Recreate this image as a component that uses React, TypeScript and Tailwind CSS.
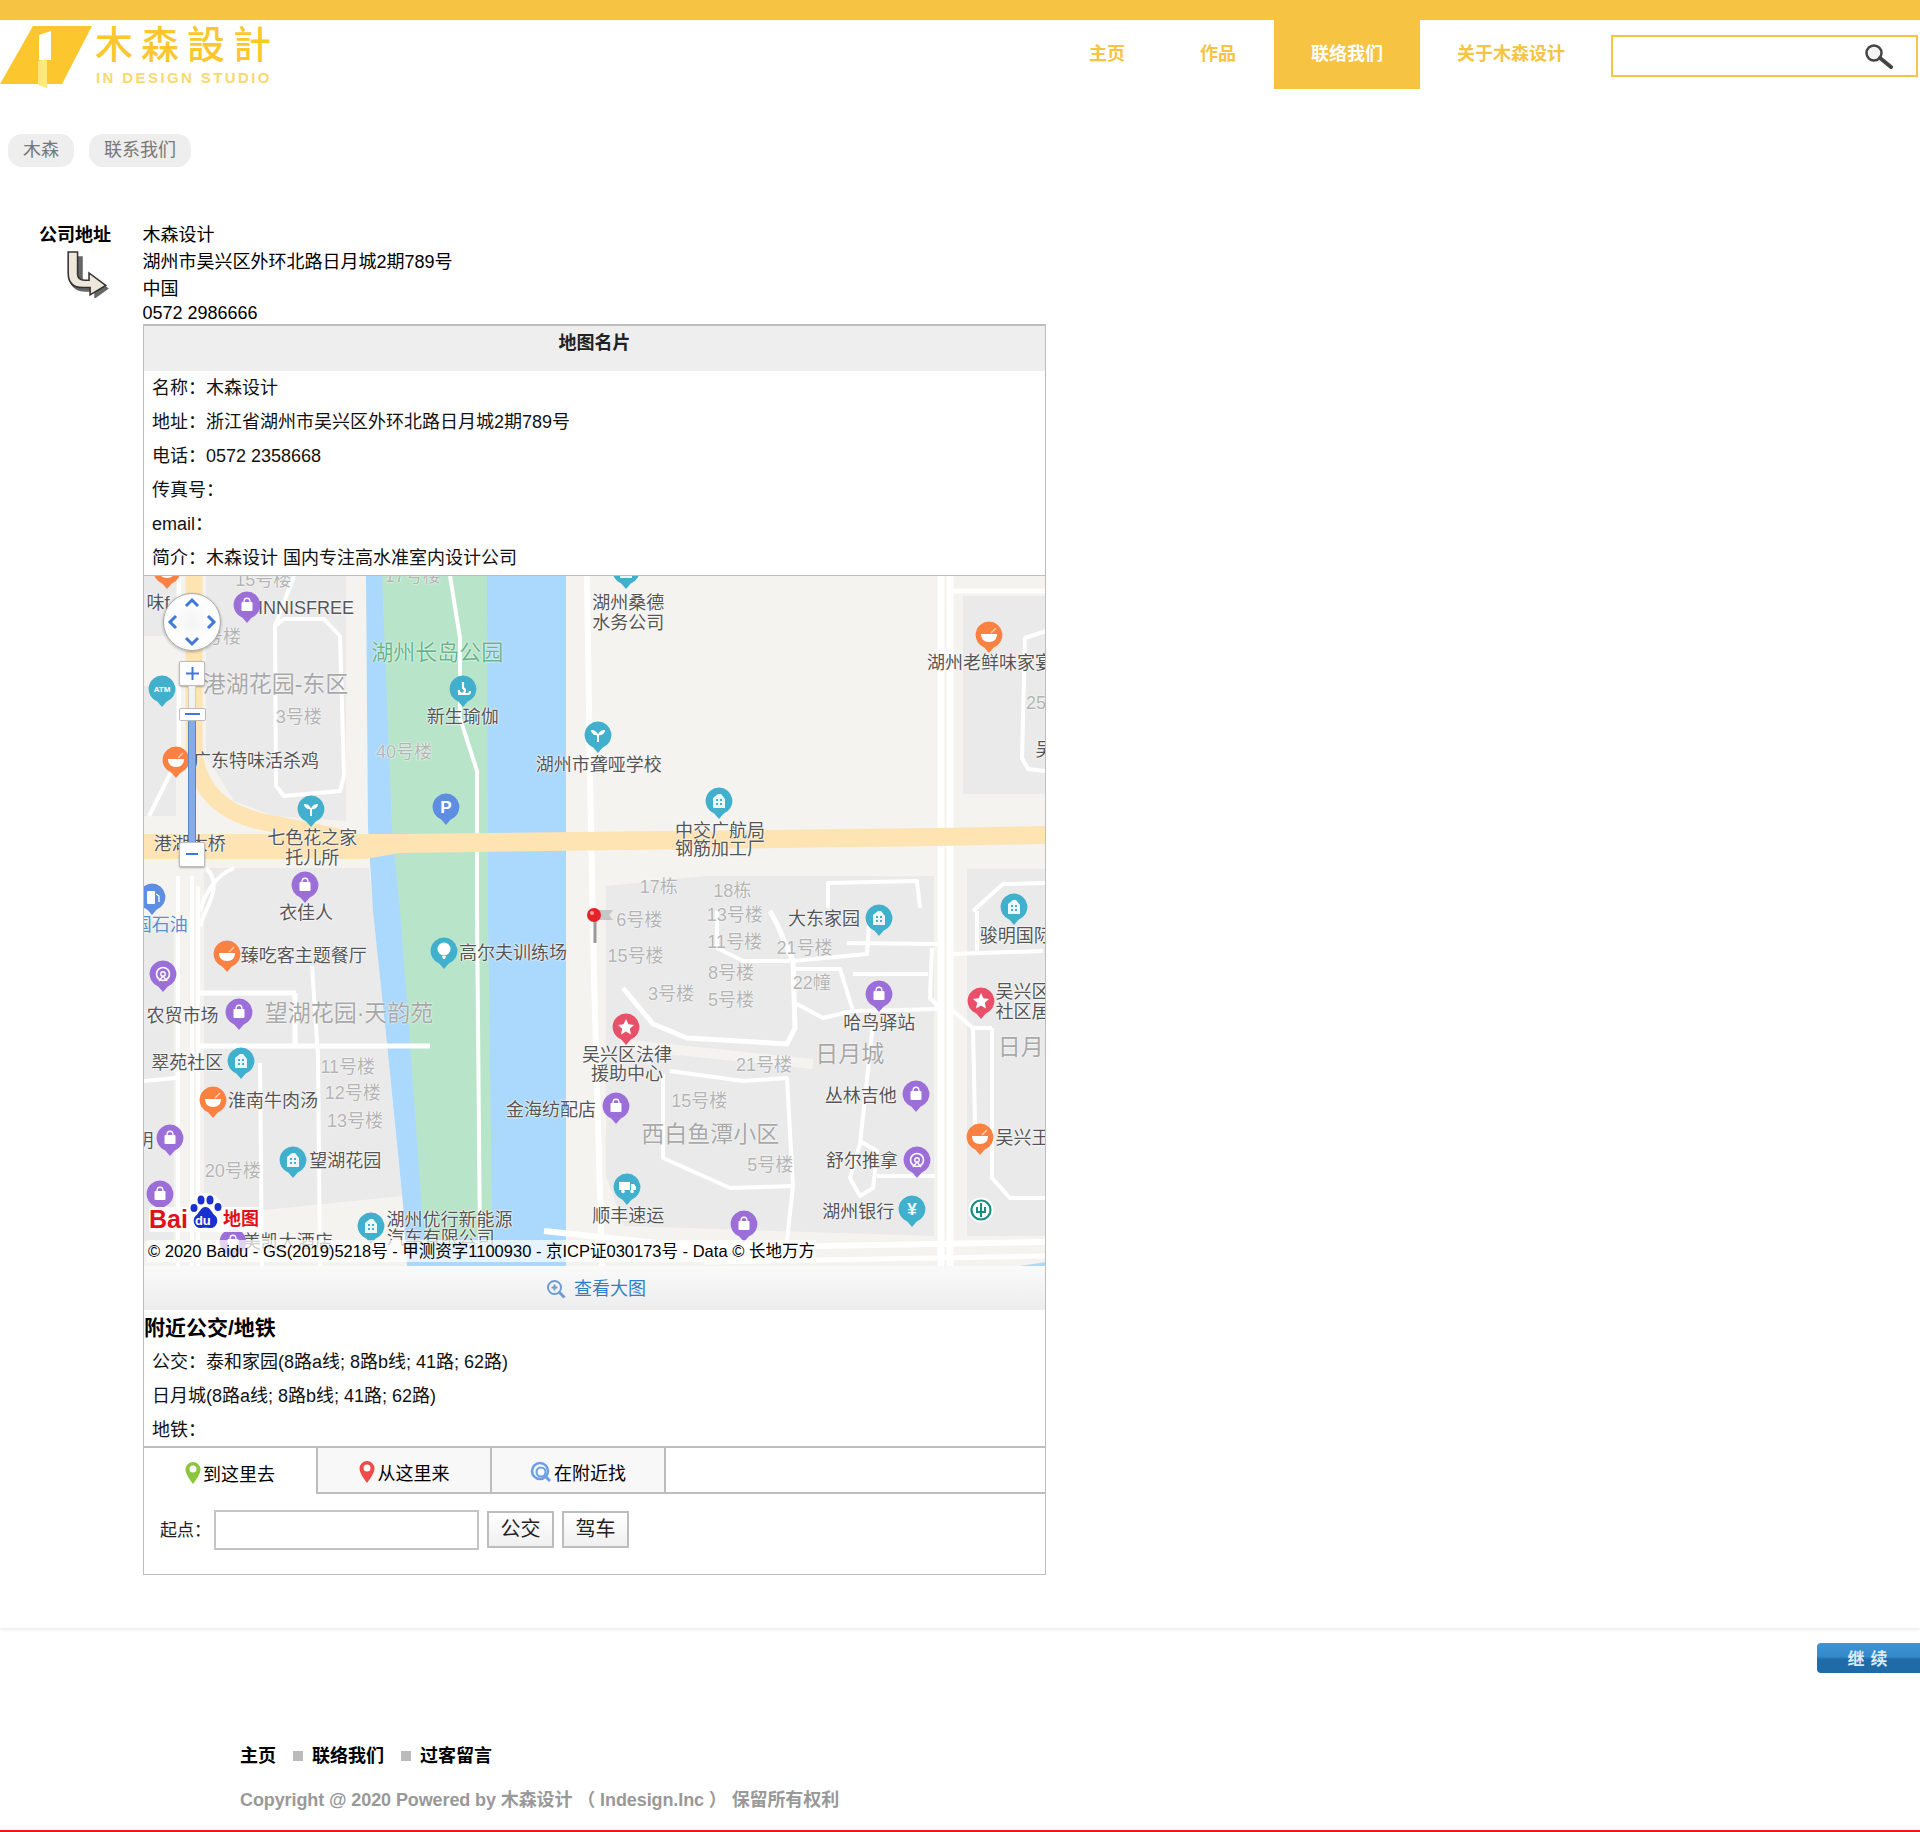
const mx = (sx: number) => sx * 1.2245 - 144;
const my = (sy: number) => sy * 1.2245 - 575;

type Kind = 'dark' | 'gray' | 'big' | 'park' | 'blue';

const kindClass: Record<Kind, string> = {
  dark: 'text-[18px] text-[#555] [text-shadow:0_0_2px_#fff,0_0_2px_#fff,0_0_1px_#fff]',
  gray: 'text-[18px] text-[#b4b4b4] [text-shadow:0_0_2px_#fff,0_0_1px_#fff]',
  big: 'text-[23px] text-[#a8a8a8] [text-shadow:0_0_2px_#fff,0_0_1px_#fff]',
  park: 'text-[22px] text-[#68b48a] [text-shadow:0_0_2px_#fff,0_0_1px_#fff]',
  blue: 'text-[18px] text-[#5b8fd0] [text-shadow:0_0_2px_#fff]',
};

const labels: [string, number, number, Kind][] = [
  ['味f', 129, 492, 'dark'],
  ['湖州桑德', 513, 492, 'dark'],
  ['水务公司', 513, 508, 'dark'],
  ['INNISFREE', 250, 496, 'dark'],
  ['新生瑜伽', 378, 585, 'dark'],
  ['湖州市聋哑学校', 489, 624, 'dark'],
  ['广东特味活杀鸡', 209, 621, 'dark'],
  ['七色花之家', 255, 684, 'dark'],
  ['托儿所', 255, 700, 'dark'],
  ['中交广航局', 588, 678, 'dark'],
  ['钢筋加工厂', 588, 693, 'dark'],
  ['湖州老鲜味家宴', 808.5, 541, 'dark'],
  ['港湖大桥', 155, 689, 'dark'],
  ['衣佳人', 250, 745, 'dark'],
  ['臻吃客主题餐厅', 248, 780, 'dark'],
  ['高尔夫训练场', 419, 778, 'dark'],
  ['农贸市场', 149, 829, 'dark'],
  ['翠苑社区', 153, 868, 'dark'],
  ['淮南牛肉汤', 223, 899, 'dark'],
  ['望湖花园', 282, 948, 'dark'],
  ['金海纺配店', 450, 906, 'dark'],
  ['吴兴区法律', 512, 861, 'dark'],
  ['援助中心', 512, 877, 'dark'],
  ['大东家园', 673, 750, 'dark'],
  ['骏明国际', 829.5, 764, 'dark'],
  ['哈鸟驿站', 718, 835, 'dark'],
  ['丛林吉他', 703, 895, 'dark'],
  ['舒尔推拿', 704, 948, 'dark'],
  ['湖州银行', 701, 989, 'dark'],
  ['顺丰速运', 513, 993, 'dark'],
  ['湖州优行新能源', 367, 996, 'dark'],
  ['汽车有限公司', 360, 1011, 'dark'],
  ['美凯大酒店', 235, 1014, 'dark'],
  ['吴兴区', 835, 810, 'dark'],
  ['社区居', 835, 826, 'dark'],
  ['吴兴王', 835, 929, 'dark'],
  ['明', 118, 931, 'dark'],
  ['吴', 853, 612, 'dark'],
  ['中国石油', 124, 755, 'blue'],
  ['港湖花园-东区', 225, 558, 'big'],
  ['望湖花园·天韵苑', 285, 827, 'big'],
  ['西白鱼潭小区', 580, 926, 'big'],
  ['日月城', 694, 860, 'big'],
  ['日月城', 843, 855, 'big'],
  ['湖州长岛公园', 357, 533, 'park'],
  ['15号楼', 215, 473, 'gray'],
  ['17号楼', 337, 470, 'gray'],
  ['5号楼', 178, 520, 'gray'],
  ['3号楼', 244, 585, 'gray'],
  ['40号楼', 330, 614, 'gray'],
  ['17栋', 538, 724, 'gray'],
  ['18栋', 598, 727, 'gray'],
  ['6号楼', 522, 751, 'gray'],
  ['13号楼', 600, 747, 'gray'],
  ['11号楼', 600, 769, 'gray'],
  ['21号楼', 657, 774, 'gray'],
  ['15号楼', 519, 780, 'gray'],
  ['8号楼', 597, 794, 'gray'],
  ['22幢', 663, 802, 'gray'],
  ['3号楼', 548, 811, 'gray'],
  ['5号楼', 597, 816, 'gray'],
  ['21号楼', 624, 869, 'gray'],
  ['15号楼', 571, 899, 'gray'],
  ['5号楼', 629, 951, 'gray'],
  ['11号楼', 284, 871, 'gray'],
  ['12号楼', 288, 892, 'gray'],
  ['13号楼', 290, 915, 'gray'],
  ['20号楼', 190, 956, 'gray'],
  ['25', 846, 574, 'gray'],
];

type Glyph = 'bag' | 'wheel' | 'atm' | 'yoga' | 'sprout' | 'building' | 'truck' | 'golf' | 'yuan' | 'bowl' | 'star' | 'p' | 'fuel';

const PURPLE = '#9c6fd8';
const TEAL = '#41b0cc';
const ORANGE = '#fb8143';
const RED = '#e8506a';
const BLUE = '#5d8ee2';

const pins: [number, number, string, Glyph][] = [
  [136, 466, ORANGE, 'bowl'],
  [511, 466, TEAL, 'building'],
  [202, 494, PURPLE, 'bag'],
  [808, 518, ORANGE, 'bowl'],
  [132, 562, TEAL, 'atm'],
  [378, 562, TEAL, 'yoga'],
  [488, 600, TEAL, 'sprout'],
  [144, 620, ORANGE, 'bowl'],
  [587, 654, TEAL, 'building'],
  [254, 660, TEAL, 'sprout'],
  [364, 659, BLUE, 'p'],
  [249, 722, PURPLE, 'bag'],
  [124, 732, BLUE, 'fuel'],
  [718, 749, TEAL, 'building'],
  [828, 740, TEAL, 'building'],
  [185, 779, ORANGE, 'bowl'],
  [363, 776, TEAL, 'golf'],
  [133, 795, PURPLE, 'wheel'],
  [718, 811, PURPLE, 'bag'],
  [801, 817, RED, 'star'],
  [195, 826, PURPLE, 'bag'],
  [511, 838, RED, 'star'],
  [197, 866, TEAL, 'building'],
  [174, 898, ORANGE, 'bowl'],
  [748, 893, PURPLE, 'bag'],
  [503, 903, PURPLE, 'bag'],
  [800, 928, ORANGE, 'bowl'],
  [139, 929, PURPLE, 'bag'],
  [239, 947, TEAL, 'building'],
  [749, 947, PURPLE, 'wheel'],
  [512, 969, TEAL, 'truck'],
  [131, 975, PURPLE, 'bag'],
  [745, 987, TEAL, 'yuan'],
  [303, 1001, TEAL, 'building'],
  [608, 999, PURPLE, 'bag'],
  [190, 1014, PURPLE, 'bag'],
];

function GlyphShape({ g }: { g: Glyph }) {
  switch (g) {
    case 'bag':
      return (
        <g>
          <rect x="8.5" y="11" width="11" height="9" rx="1" fill="#fff" />
          <path d="M11 11c0-5 6-5 6 0" fill="none" stroke="#fff" strokeWidth="1.3" />
        </g>
      );
    case 'wheel':
      return (
        <g fill="none" stroke="#fff">
          <circle cx="14" cy="14" r="6.5" strokeWidth="1.6" />
          <circle cx="14" cy="14" r="2.2" strokeWidth="1.4" />
          <path d="M10 21l4-5 4 5" strokeWidth="1.3" />
        </g>
      );
    case 'atm':
      return (
        <text x="14" y="17" textAnchor="middle" fontSize="8" fontWeight="700" fill="#fff">
          ATM
        </text>
      );
    case 'yoga':
      return <path d="M14 7v6a3 3 0 1 1-4 2M9 19h10c1 0 2-1 2-3" fill="none" stroke="#fff" strokeWidth="2.2" />;
    case 'sprout':
      return (
        <g fill="#fff">
          <path d="M14 14C13 10 10 9 7 9c0 3 3 6 7 5z" />
          <path d="M14 14c1-4 4-5 7-5 0 3-3 6-7 5z" />
          <rect x="13" y="13" width="2" height="8" />
        </g>
      );
    case 'building':
      return (
        <g>
          <path d="M8 21V11l5-4h3l4 5v9z" fill="#fff" fillOpacity="0.9" />
          <path d="M11 12h2v2h-2zM15 12h2v2h-2zM11 16h2v2h-2zM15 16h2v2h-2z" fill={TEAL} />
        </g>
      );
    case 'truck':
      return (
        <g fill="#fff">
          <rect x="6" y="9" width="11" height="8" />
          <path d="M18 11h3l2 3v3h-5z" />
          <circle cx="10" cy="18.5" r="1.8" />
          <circle cx="19" cy="18.5" r="1.8" />
        </g>
      );
    case 'golf':
      return (
        <g>
          <circle cx="14" cy="12" r="6.5" fill="#fff" />
          <path d="M12 19h4l-1 3h-2z" fill="#fff" />
        </g>
      );
    case 'yuan':
      return (
        <text x="14" y="20" textAnchor="middle" fontSize="17" fontWeight="700" fill="#fff">
          ¥
        </text>
      );
    case 'bowl':
      return (
        <g>
          <path d="M6 13h16c0 5-3 8-8 8s-8-3-8-8z" fill="#fff" />
          <path d="M16 12l5-5" stroke="#ffd0b0" strokeWidth="1.4" />
        </g>
      );
    case 'star':
      return <polygon points="14,6 16.4,11.3 22,12 17.8,15.8 19,21.5 14,18.6 9,21.5 10.2,15.8 6,12 11.6,11.3" fill="#fff" />;
    case 'p':
      return (
        <text x="14" y="20" textAnchor="middle" fontSize="17" fontWeight="700" fill="#fff">
          P
        </text>
      );
    case 'fuel':
      return (
        <g fill="#fff">
          <rect x="9" y="8" width="8" height="13" rx="1" />
          <path d="M18 11l3 2v6" stroke="#fff" fill="none" strokeWidth="1.3" />
        </g>
      );
  }
}

function Pin({ sx, sy, color, glyph }: { sx: number; sy: number; color: string; glyph: Glyph }) {
  return (
    <svg
      className="absolute"
      style={{ left: mx(sx) - 14, top: my(sy) - 14 }}
      width="28"
      height="33"
      viewBox="0 0 28 33"
    >
      <path d="M14 0.5a13.5 13.5 0 0 1 4.5 26.2L14 32l-4.5-5.3A13.5 13.5 0 0 1 14 0.5z" fill={color} />
      <GlyphShape g={glyph} />
    </svg>
  );
}

function MapBase() {
  return (
    <svg className="absolute inset-0" width="902" height="690" viewBox="0 0 902 690">
      <rect width="902" height="690" fill="#f5f3f0" />
      {/* blocks */}
      <g fill="#eaeaea">
        <path d="M62 0H202V245L130 240 90 225 62 180Z" />
        <rect x="0" y="110" width="32" height="130" />
        <rect x="0" y="0" width="32" height="60" />
        <path d="M60 292H225L258 620 60 640Z" />
        <rect x="0" y="345" width="30" height="320" />
        <path d="M462 310L560 300H790V660L480 650 462 600Z" />
        <rect x="819" y="20" width="83" height="198" />
        <rect x="823" y="293" width="79" height="367" />
      </g>
      {/* river and park */}
      <path d="M222 0L224 252 229 335 243 468 259 628 263 690H422V0Z" fill="#aad9fd" />
      <path d="M238 0L248 252 256 335 266 468 278 635 282 662H349L348 635 344 335 343 0Z" fill="#b8e5ca" />
      <path d="M876 690L902 686V690Z" fill="#aad9fd" />
      {/* white roads */}
      <g fill="none" stroke="#fff" strokeWidth="4" strokeLinejoin="round">
        <path d="M306 0L316 62V142L333 195V335L336 670" />
        <path d="M150 0L131 50 140 43H180L196 60 200 200 196 215 140 220 132 210 131 50" />
        <path d="M35 0V60M35 110V180L5 240" />
        <path d="M443 0L446 200 450 400 458 690" strokeWidth="6" />
        <path d="M797 0V690M806 0V690" strokeWidth="7" />
        <path d="M809 15H902" strokeWidth="5" />
        <path d="M902 55L881 62 878 182 884 193 902 195" />
        <path d="M34 300V690M48 300V690M54 310V690" />
        <path d="M56 417H152M151 417V470M56 470H286" strokeWidth="5" />
        <path d="M168 390L174 480 176 690M116 487L118 690M0 505L32 502" />
        <path d="M62 292C80 310 62 330 56 350M90 292C70 300 60 320 56 335" />
        <path d="M479 412L509 448 543 462 643 468 651 452 649 385 633 348 626 335" strokeWidth="5" />
        <path d="M684 332V307L773 305 776 332" />
        <path d="M726 335L723 378 649 385" />
        <path d="M573 335V372L599 385 646 385" />
        <path d="M649 393H696L709 435 679 442 653 428" />
        <path d="M709 398H784M709 435L796 433M703 367L793 368" />
        <path d="M729 448L716 568 706 602 716 620 729 612 733 575 716 565" />
        <path d="M733 600H791" />
        <path d="M526 495L599 505 643 502 649 610 643 665M519 498V582L586 612 649 610" />
        <path d="M809 378L899 375M809 435L829 452H848M829 452L831 548M848 452V602L866 622H902" />
        <path d="M902 307L859 308 829 335M833 335V375" />
        <path d="M788 372L786 422 796 432" />
        <path d="M400 655L560 672 902 666" strokeWidth="6" />
        <path d="M560 686L902 680" strokeWidth="5" />
      </g>
      <path d="M476 468L669 488" stroke="#f5f3f0" strokeWidth="10" fill="none" />
      {/* main roads */}
      <path d="M0 258H221L256 258 793 252 902 250V268L793 270 256 277 221 283H0Z" fill="#fee3b3" />
      <path d="M50 0V175Q55 230 115 245L200 262" stroke="#fee3b3" strokeWidth="17" fill="none" />
    </svg>
  );
}

function MapControls() {
  return (
    <>
      <div className="absolute left-[19px] top-[17px] w-[58px] h-[58px] rounded-full border border-[#aaa] bg-[radial-gradient(circle_at_center,#f4f4f4_0%,#fff_60%,#eee_100%)] shadow-[0_1px_3px_rgba(0,0,0,0.3)]">
        <svg width="56" height="56" viewBox="0 0 56 56" fill="none" stroke="#3f78d8" strokeWidth="3">
          <path d="M22 12l6-6 6 6M22 44l6 6 6-6M12 22l-6 6 6 6M44 22l6 6-6 6" />
        </svg>
      </div>
      <div className="absolute left-[35px] top-[85px] w-[26px] flex flex-col items-center">
        <div className="w-[26px] h-[25px] rounded-[2px] border border-[#bbb] bg-white shadow-[0_1px_2px_rgba(0,0,0,0.3)] flex items-center justify-center">
          <svg width="13" height="13" viewBox="0 0 13 13" stroke="#3f78d8" strokeWidth="2">
            <path d="M6.5 0v13M0 6.5h13" />
          </svg>
        </div>
        <div className="w-[8px] h-[22px] border-x border-[#ccc] bg-[#f2f2f2]" />
        <div className="w-[27px] h-[13px] rounded-[2px] border border-[#bbb] bg-white flex items-center justify-center">
          <div className="w-[15px] h-[2px] bg-[#3f78d8]" />
        </div>
        <div className="w-[8px] h-[121px] bg-[#86ace8] border-x border-[#5a84c8]" />
        <div className="w-[26px] h-[25px] rounded-[2px] border border-[#bbb] bg-white shadow-[0_1px_2px_rgba(0,0,0,0.3)] flex items-center justify-center">
          <div className="w-[12px] h-[2px] bg-[#3f78d8]" />
        </div>
      </div>
    </>
  );
}

function RedMarker() {
  return (
    <svg className="absolute" style={{ left: mx(485) - 10, top: my(748) - 9 }} width="36" height="38" viewBox="0 0 36 38">
      <path d="M13 3h16l-4 5 4 5H13z" fill="#bbb" fillOpacity="0.8" />
      <rect x="9.5" y="8" width="3" height="28" fill="#999" />
      <circle cx="10" cy="8" r="7" fill="#e3242b" />
      <circle cx="8" cy="6" r="2" fill="#ff9a9a" />
    </svg>
  );
}

function BankMark() {
  return (
    <svg className="absolute" style={{ left: mx(801) - 13, top: my(988) - 13 }} width="26" height="26" viewBox="0 0 26 26">
      <circle cx="13" cy="13" r="12.5" fill="#fff" />
      <circle cx="13" cy="13" r="9.5" fill="none" stroke="#14907f" strokeWidth="2.2" />
      <path d="M13 6v14M9 10v5h8v-5" fill="none" stroke="#14907f" strokeWidth="2" />
    </svg>
  );
}

function BaiduLogo() {
  return (
    <div className="absolute left-[5px] top-[616px] h-[40px] w-[112px] flex items-end">
      <div className="absolute left-0 bottom-0 h-[25px] w-[112px] rounded-[3px] bg-white/90" />
      <span className="relative text-[25px] leading-[25px] font-bold text-[#e3101a]">Bai</span>
      <div className="relative w-[35px] h-[39px] rounded-full bg-white/80">
        <svg className="absolute inset-0" width="35" height="39" viewBox="0 0 35 39" fill="#1a2fd0">
          <ellipse cx="6" cy="15" rx="3.5" ry="4" />
          <ellipse cx="13" cy="7" rx="3.5" ry="4.5" />
          <ellipse cx="22" cy="7" rx="3.5" ry="4.5" />
          <ellipse cx="30" cy="14" rx="3.5" ry="4" />
          <path d="M17.5 14c-5 0-6 6-10 9-4 4-1 13 6 12 3-.5 5-.5 8 0 7 1 10-8 6-12-4-3-5-9-10-9z" />
        </svg>
        <span className="absolute left-[7px] top-[21px] text-[13px] leading-[14px] font-bold text-white">du</span>
      </div>
      <span className="relative text-[18px] leading-[25px] font-bold text-[#e3101a]">地图</span>
    </div>
  );
}

function BaiduMap() {
  return (
    <div className="relative h-[690px] w-full overflow-hidden">
      <MapBase />
      {labels.map(([text, sx, sy, kind], i) => (
        <div
          key={i}
          className={`absolute whitespace-nowrap leading-none -translate-x-1/2 -translate-y-1/2 ${kindClass[kind]}`}
          style={{ left: mx(sx), top: my(sy) }}
        >
          {text}
        </div>
      ))}
      {pins.map(([sx, sy, color, glyph], i) => (
        <Pin key={i} sx={sx} sy={sy} color={color} glyph={glyph} />
      ))}
      <BankMark />
      <RedMarker />
      <MapControls />
      <BaiduLogo />
      <div className="absolute left-[3px] top-[664px] h-[22px] pl-px pr-px bg-white/70 text-[16.5px] leading-[22px] text-black whitespace-nowrap">
        © 2020 Baidu - GS(2019)5218号 - 甲测资字1100930 - 京ICP证030173号 - Data © 长地万方
      </div>
    </div>
  );
}

function TabPin({ color }: { color: string }) {
  return (
    <svg width="16" height="24" viewBox="0 0 16 24" className="mb-[6px] mr-[2px]">
      <path d="M8 1a7.5 7.5 0 0 1 7.5 7.5C15.5 14 8 23 8 23S.5 14 .5 8.500A7.500 7.500 0 0 1 8 1z" fill={color} />
      <circle cx="8" cy="8" r="3.500" fill="#fff" />
    </svg>
  );
}

function App() {
  return (
    <div className="relative h-[1832px] w-[1920px] bg-white text-black flex flex-col font-['Liberation_Sans','Noto_Sans_CJK_SC',sans-serif] text-[18px] overflow-hidden">
      <div className="h-5 bg-[#f6c343]" />

      {/* header */}
      <div className="h-[69px] flex justify-between">
        <div className="flex items-start">
          <svg width="95" height="70" viewBox="0 0 95 70" className="shrink-0">
            <path d="M0 64L33 6H92L62 64Z" fill="#fcc72e" />
            <path d="M39 15L51 11V40H39Z" fill="#fff" />
            <path d="M38 41L47 39V68L38 65Z" fill="#ffe97a" />
          </svg>
          <div className="flex flex-col pt-[3px]">
            <div className="text-[38px] leading-[44px] font-medium tracking-[8px] text-[#fcc72e]">木森設計</div>
            <div className="mt-[3px] text-[15px] leading-[16px] font-bold tracking-[2.4px] text-[#f9d96f] ml-[1px]">IN DESIGN STUDIO</div>
          </div>
        </div>
        <div className="flex items-start">
          <nav className="flex h-[69px] items-center font-bold text-[#f6c343]">
            <a className="px-[37px]">主页</a>
            <a className="ml-px px-[37px]">作品</a>
            <a className="ml-px flex h-full items-center bg-[#f6c343] px-[37px] text-white">联络我们</a>
            <a className="px-[37px]">关于木森设计</a>
          </nav>
          <div className="ml-[9px] mr-[2px] mt-[15px] flex h-[42px] w-[307px] items-center justify-end border-2 border-[#f6c343] pr-[22px]">
            <svg width="30" height="26" viewBox="0 0 30 26" fill="none">
              <circle cx="10" cy="10" r="7.500" stroke="#444" strokeWidth="2.500" fill="#f4f4f4" />
              <path d="M16 15l11 9" stroke="#444" strokeWidth="4" strokeLinecap="round" />
            </svg>
          </div>
        </div>
      </div>

      {/* breadcrumb */}
      <div className="mt-[45px] ml-2 flex gap-[15px] text-[#777]">
        <span className="flex h-[33px] w-[66px] items-center justify-center rounded-[14px] bg-[#eee]">木森</span>
        <span className="flex h-[33px] w-[102px] items-center justify-center rounded-[14px] bg-[#eee]">联系我们</span>
      </div>

      {/* content */}
      <div className="h-[1461px] shrink-0 shadow-[0_2px_3px_rgba(0,0,0,0.08)]">
        <div className="flex pt-[54.500px]">
          <div className="w-[143px] shrink-0 pl-[39px]">
            <div className="font-bold leading-[27px]">公司地址</div>
            <svg width="48" height="48" viewBox="0 0 46 46" className="ml-[25px] mt-[1px]">
              <path d="M8 6h10v20c0 4 3 6 7 6h2v-7l16 12-14 10v-7h-8C12 40 5 35 5 26V8z" fill="#666" />
              <path d="M4 2h9v21c0 4 3 6 7 6h4v-7l16 12-15 9v-7h-7C9 36 4 31 4 22z" fill="#efe7dc" stroke="#333" strokeWidth="1.500" />
            </svg>
          </div>
          <div className="w-[904px] -ml-px">
            <div className="pl-[0.500px]">
              <div className="leading-[27px]">木森设计</div>
              <div className="leading-[27px]">湖州市昊兴区外环北路日月城2期789号</div>
              <div className="leading-[27px]">中国</div>
              <div className="leading-[21px]">0572 2986666</div>
            </div>

            {/* map card */}
            <div className="ml-px border border-[#bdbdbd] border-t-2">
              <div className="h-[45px] bg-[#eee] pt-[4px] text-center font-bold leading-[26px] text-[#222]">地图名片</div>
              <div className="border-b border-[#bdbdbd] pl-2 text-[#111] leading-[34px]">
                <div>名称：木森设计</div>
                <div>地址：浙江省湖州市吴兴区外环北路日月城2期789号</div>
                <div>电话：0572 2358668</div>
                <div>传真号：</div>
                <div>email：</div>
                <div className="h-[34px]">简介：木森设计 国内专注高水准室内设计公司</div>
              </div>
              <BaiduMap />
              <div className="flex h-[44px] items-center justify-center gap-2 bg-[linear-gradient(#fafafa,#ededed)] pt-[3px] pl-[3px] text-[#2f7fc8]">
                <svg width="20" height="20" viewBox="0 0 20 20" fill="none" stroke="#6d9bd4" strokeWidth="2">
                  <circle cx="8.500" cy="8.500" r="6.500" />
                  <path d="M13.500 13.500L18.500 18.500" strokeWidth="3" />
                  <path d="M5.500 8.500h6M8.500 5.500v6" />
                </svg>
                查看大图
              </div>
              <div className="h-[35px] text-[21px] font-bold leading-[36px]">附近公交/地铁</div>
              <div className="pl-2 leading-[34px] text-[#111]">
                <div>公交：泰和家园(8路a线; 8路b线; 41路; 62路)</div>
                <div>日月城(8路a线; 8路b线; 41路; 62路)</div>
                <div className="h-[33px]">地铁：</div>
              </div>
              <div className="flex h-[48px] border-t-2 border-[#bdbdbd]">
                <div className="flex w-[174px] items-center justify-center border-r-2 border-[#bdbdbd] bg-white pt-[10px]">
                  <TabPin color="#8cc63f" />
                  到这里去
                </div>
                <div className="flex w-[174px] items-center justify-center border-r-2 border-b-2 border-[#bdbdbd] bg-[#f8f8f8] pt-[10px]">
                  <TabPin color="#ee4b4b" />
                  <span className="ml-px">从这里来</span>
                </div>
                <div className="flex w-[174px] items-center justify-center border-r-2 border-b-2 border-[#bdbdbd] bg-[#f8f8f8] pt-[10px]">
                  <svg width="22" height="22" viewBox="0 0 22 22" fill="none" className="mb-[6px] mr-[2px]" stroke="#6d9ee0">
                    <circle cx="10" cy="10" r="8" strokeWidth="2.500" />
                    <circle cx="11" cy="11" r="4.500" strokeWidth="2" />
                    <path d="M15 15l5 5" strokeWidth="3" />
                  </svg>
                  在附近找
                </div>
                <div className="flex-1 border-b-2 border-[#bdbdbd]" />
              </div>
              <div className="flex h-[80px] items-start pl-[16px] pt-[16px] text-[#222]">
                <span className="text-[17px] leading-[42px]">起点：</span>
                <div className="ml-[3px] h-[40px] w-[265px] border-2 border-[#c4c4c4]" />
                <button className="ml-[8px] mt-px h-[37px] w-[67px] border-2 border-[#bdbdbd] bg-[linear-gradient(#fff,#f0f0f0)] text-[20px]">公交</button>
                <button className="ml-2 mt-px h-[37px] w-[67px] border-2 border-[#bdbdbd] bg-[linear-gradient(#fff,#f0f0f0)] text-[20px]">驾车</button>
              </div>
            </div>
          </div>
        </div>
      </div>

      {/* continue */}
      <div className="mt-[15px] flex justify-end">
        <button className="h-[30px] w-[103px] rounded-l-[4px] bg-[linear-gradient(#3f94d6_0%,#3489c9_45%,#1f6ba8_55%,#1f6ba8_100%)] pl-1 pt-[3px] text-[17px] font-bold tracking-[6px] text-[#dcebf6]">继续</button>
      </div>

      {/* footer */}
      <div className="mt-[71px] flex items-center pl-[240px] font-bold leading-6">
        <span>主页</span>
        <span className="ml-[17px] h-[10px] w-[10px] bg-[#bbb]" />
        <span className="ml-[9px]">联络我们</span>
        <span className="ml-[17px] h-[10px] w-[10px] bg-[#bbb]" />
        <span className="ml-[9px]">过客留言</span>
      </div>
      <div className="mt-[20px] pl-[240px] font-bold leading-6 tracking-[-0.1px] text-[#999]">Copyright @ 2020 Powered by 木森设计 （ Indesign.Inc ） 保留所有权利</div>
      <div className="mt-auto h-[2px] bg-[#f0141e]" />
    </div>
  );
}

export default App;
